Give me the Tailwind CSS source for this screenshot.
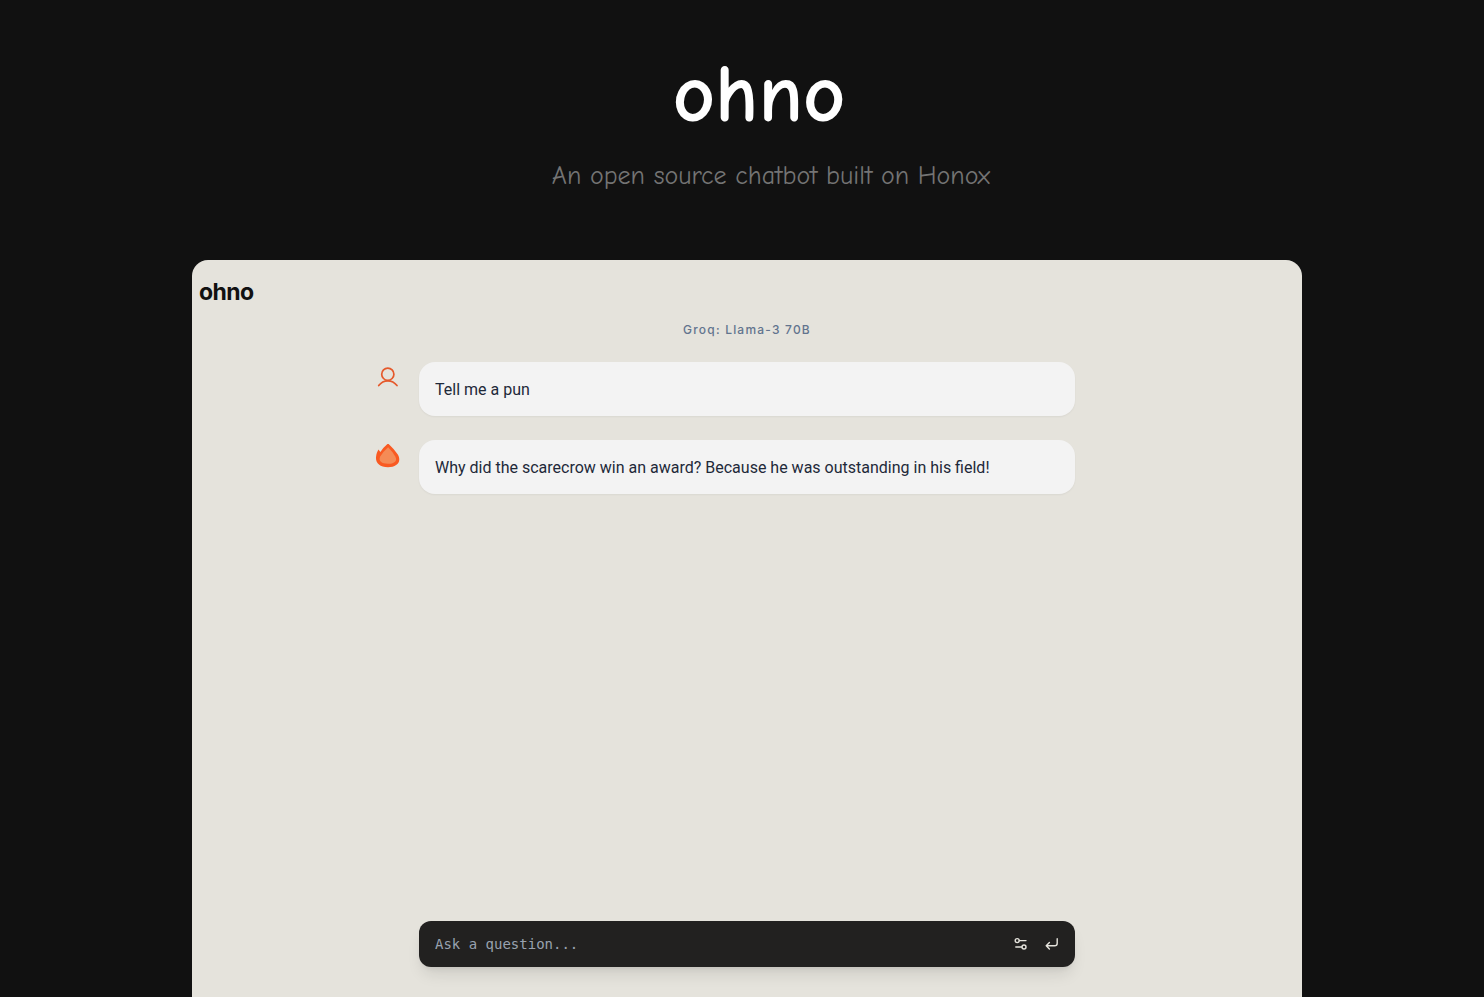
<!DOCTYPE html>
<html lang="en">
<head>
<meta charset="utf-8">
<meta name="viewport" content="width=device-width, initial-scale=1">
<title>ohno</title>
<script src="https://cdn.jsdelivr.net/npm/@tailwindcss/browser@4"></script>
</head>
<body class="flex min-h-screen flex-col bg-[#111111] font-['Inter',sans-serif]">
<header class="flex h-[260px] shrink-0 flex-col items-center pt-[46px] font-['Comic_Neue','Comic_Sans_MS','Roboto',sans-serif]">
  <h1 class="pl-[34px] text-[82px] leading-[98px] font-bold text-white">ohno</h1>
  <p class="mt-4 pl-[58px] text-[26px] leading-8 text-[#747474]">An open source chatbot built on Honox</p>
</header>
<div class="flex grow pl-[10px]">
  <main class="mx-auto flex w-full max-w-[1110px] flex-col rounded-t-2xl bg-[#e5e3dc]">
    <h2 class="px-[7px] pt-4 text-[23px] leading-8 font-bold tracking-tight text-[#111111]">ohno</h2>
    <div class="mx-auto flex w-full max-w-[656px] grow flex-col">
      <p class="mt-3 text-center text-xs leading-5 font-medium tracking-widest text-slate-500">Groq: Llama-3 70B</p>
      <div class="mt-[22px] flex flex-col gap-6">
        <section class="-ml-11 flex items-start gap-[18px]">
          <svg class="mt-1 size-[26px] shrink-0 text-[#e5592b]" viewBox="0 0 26 26" fill="none" stroke="currentColor" stroke-width="1.7" stroke-linecap="round" aria-label="You"><circle cx="12.8" cy="8.2" r="6.1"/><path d="M3.7 19.6C8.5 13.2 17.1 13.2 22 19.6"/></svg>
          <p class="grow rounded-2xl bg-[#f3f3f3] px-4 pt-4 pb-[14px] font-['Roboto',sans-serif] text-base leading-6 text-gray-800 shadow-xs">Tell me a pun</p>
        </section>
        <section class="-ml-11 flex items-start gap-[18px]">
          <svg class="mt-1 size-[26px] shrink-0" viewBox="0 0 26 26" aria-label="ohno"><path fill="#f95a22" d="M3.4 5.5 5.4 8Q8.5 3 13.1-.5 19 4.8 22.8 10.6C27 18 21.8 23.2 13 23.2 4.2 23.2.2 18.6 1.1 12.4 1.4 10 2.2 7.6 3.4 5.5Z"/><path fill="#f58b56" d="M13.1 3.3Q17.6 7.7 20.4 12.7C22.8 17.3 18.8 19.8 13 19.8 6.6 19.8 3.1 17.2 5.2 12.6Q8.5 7.3 13.1 3.3Z"/></svg>
          <p class="grow rounded-2xl bg-[#f3f3f3] px-4 pt-4 pb-[14px] font-['Roboto',sans-serif] text-base leading-6 text-gray-800 shadow-xs">Why did the scarecrow win an award? Because he was outstanding in his field!</p>
        </section>
      </div>
      <form class="mt-auto mb-[30px] flex h-[46px] items-center rounded-xl bg-[#222120] pr-[15px] pl-4 text-[#e5e3dc] shadow-lg">
        <input type="text" aria-label="Ask a question" placeholder="Ask a question..." class="min-w-0 grow bg-transparent font-['DejaVu_Sans_Mono',monospace] text-sm outline-none placeholder:text-gray-400">
        <button type="button" aria-label="Settings" class="mr-[15px] shrink-0"><svg class="size-4" viewBox="0 0 16 16" fill="none" stroke="currentColor" stroke-width="1.4" stroke-linecap="round"><circle cx="4.2" cy="4.6" r="2"/><path d="M6.4 4.6H13"/><circle cx="11" cy="11" r="2"/><path d="M2.8 11H8.8"/></svg></button>
        <button type="submit" aria-label="Send" class="shrink-0"><svg class="size-4" viewBox="0 0 16 16" fill="none" stroke="currentColor" stroke-width="1.4" stroke-linecap="round" stroke-linejoin="round"><path d="M13.2 2.8V7.2Q13.2 9.8 10.6 9.8H2.2M5.4 6.6 2.2 9.8 5.4 13"/></svg></button>
      </form>
    </div>
  </main>
</div>
</body>
</html>
